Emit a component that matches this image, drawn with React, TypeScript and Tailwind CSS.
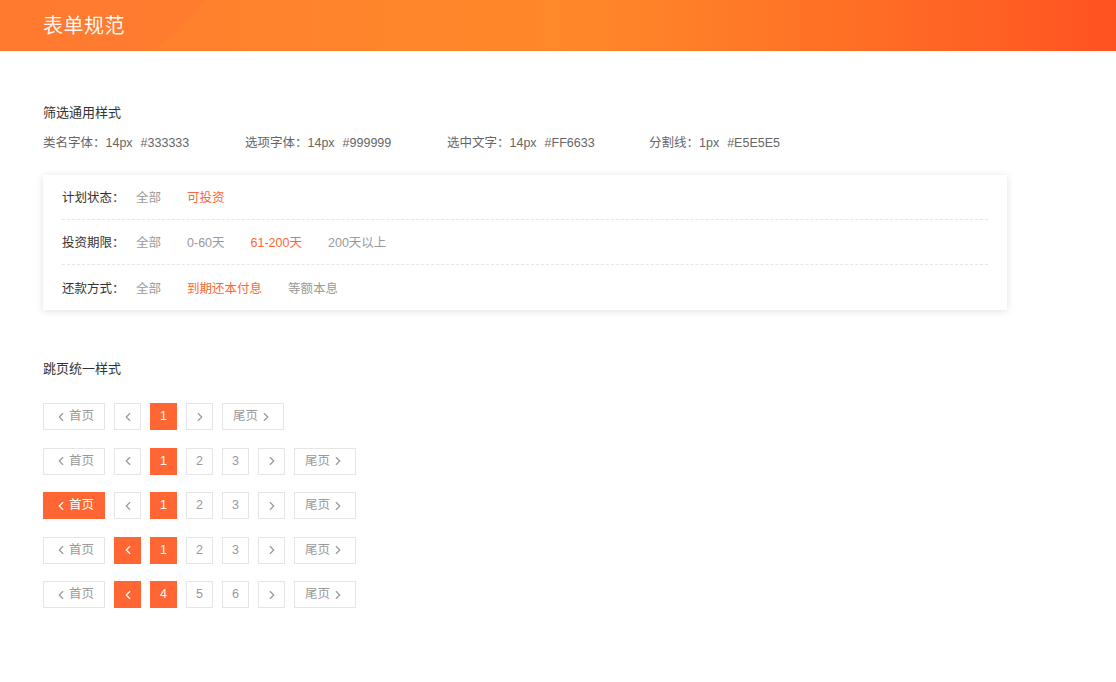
import { ChevronLeft, ChevronRight } from 'lucide-react'

const font = "font-['Liberation_Sans','Noto_Sans_CJK_SC',sans-serif]"

const specs = [
  { label: '类名字体：14px', color: '#333333' },
  { label: '选项字体：14px', color: '#999999' },
  { label: '选中文字：14px', color: '#FF6633' },
  { label: '分割线：1px', color: '#E5E5E5' },
]

const filters = [
  { label: '计划状态：', options: ['全部', '可投资'], active: 1 },
  { label: '投资期限：', options: ['全部', '0-60天', '61-200天', '200天以上'], active: 2 },
  { label: '还款方式：', options: ['全部', '到期还本付息', '等额本息'], active: 1 },
]

type PagerRow = { pages: string[]; current: number; first?: boolean; prev?: boolean }

const pagers: PagerRow[] = [
  { pages: ['1'], current: 0 },
  { pages: ['1', '2', '3'], current: 0 },
  { pages: ['1', '2', '3'], current: 0, first: true },
  { pages: ['1', '2', '3'], current: 0, prev: true },
  { pages: ['4', '5', '6'], current: 0, prev: true },
]

function Box({ active, wide, children }: { active?: boolean; wide?: boolean; children: React.ReactNode }) {
  return (
    <div
      className={`flex items-center justify-center h-[27px] text-[12.5px] border ${
        wide ? 'w-[62px]' : 'w-[27px]'
      } ${active ? 'bg-[#FF6633] border-[#FF6633] text-white' : 'bg-white border-[#E5E5E5] text-[#999999]'}`}
    >
      {children}
    </div>
  )
}

export default function App() {
  return (
    <div className={`min-h-[682px] bg-white ${font}`}>
      {/* Banner */}
      <header className="relative h-[51px] overflow-hidden bg-gradient-to-r from-[#FF7B2E] via-[#FF8A2A] to-[#FF5221]">
        <div className="absolute -left-[260px] -top-[420px] w-[520px] h-[520px] rounded-full bg-[#FF7A30] opacity-60" />
        <div className="relative flex items-center h-full pl-[43px]">
          <span className="text-[20px] text-white/95 tracking-[0.5px]">表单规范</span>
        </div>
      </header>

      <main className="px-[43px]">
        {/* Filter section */}
        <section className="pt-[53px]">
          <h2 className="text-[13px] text-[#333333] leading-[18px]">筛选通用样式</h2>
          <div className="flex mt-[13px] text-[12.5px] text-[#666666] leading-[16px]">
            {specs.map((s) => (
              <div key={s.label} className="w-[202px] flex gap-[8px]">
                <span>{s.label}</span>
                <span>{s.color}</span>
              </div>
            ))}
          </div>

          <div className="mt-[24px] w-[964px] bg-white shadow-[0_1px_8px_rgba(0,0,0,0.12)] px-[19px]">
            {filters.map((f, i) => (
              <div
                key={f.label}
                className={`flex items-center h-[45px] pt-[3px] text-[12.5px] ${
                  i < filters.length - 1 ? 'border-b border-dashed border-[#E5E5E5]' : ''
                }`}
              >
                <span className="w-[74px] text-[#333333]">{f.label}</span>
                <div className="flex gap-[26px]">
                  {f.options.map((o, j) => (
                    <span key={o} className={j === f.active ? 'text-[#FF6633]' : 'text-[#999999]'}>
                      {o}
                    </span>
                  ))}
                </div>
              </div>
            ))}
          </div>
        </section>

        {/* Pagination section */}
        <section className="pt-[50px]">
          <h2 className="text-[13px] text-[#333333] leading-[18px]">跳页统一样式</h2>
          <div className="flex flex-col gap-[17.5px] mt-[25px]">
            {pagers.map((p, i) => (
              <div key={i} className="flex gap-[9px]">
                <Box wide active={p.first}>
                  <ChevronLeft className="w-[14px] h-[14px] mr-[1px]" strokeWidth={2} />
                  首页
                </Box>
                <Box active={p.prev}>
                  <ChevronLeft className="w-[14px] h-[14px]" strokeWidth={2} />
                </Box>
                {p.pages.map((n, j) => (
                  <Box key={n} active={j === p.current}>
                    {n}
                  </Box>
                ))}
                <Box>
                  <ChevronRight className="w-[14px] h-[14px]" strokeWidth={2} />
                </Box>
                <Box wide>
                  尾页
                  <ChevronRight className="w-[14px] h-[14px] ml-[1px]" strokeWidth={2} />
                </Box>
              </div>
            ))}
          </div>
        </section>
      </main>
    </div>
  )
}
